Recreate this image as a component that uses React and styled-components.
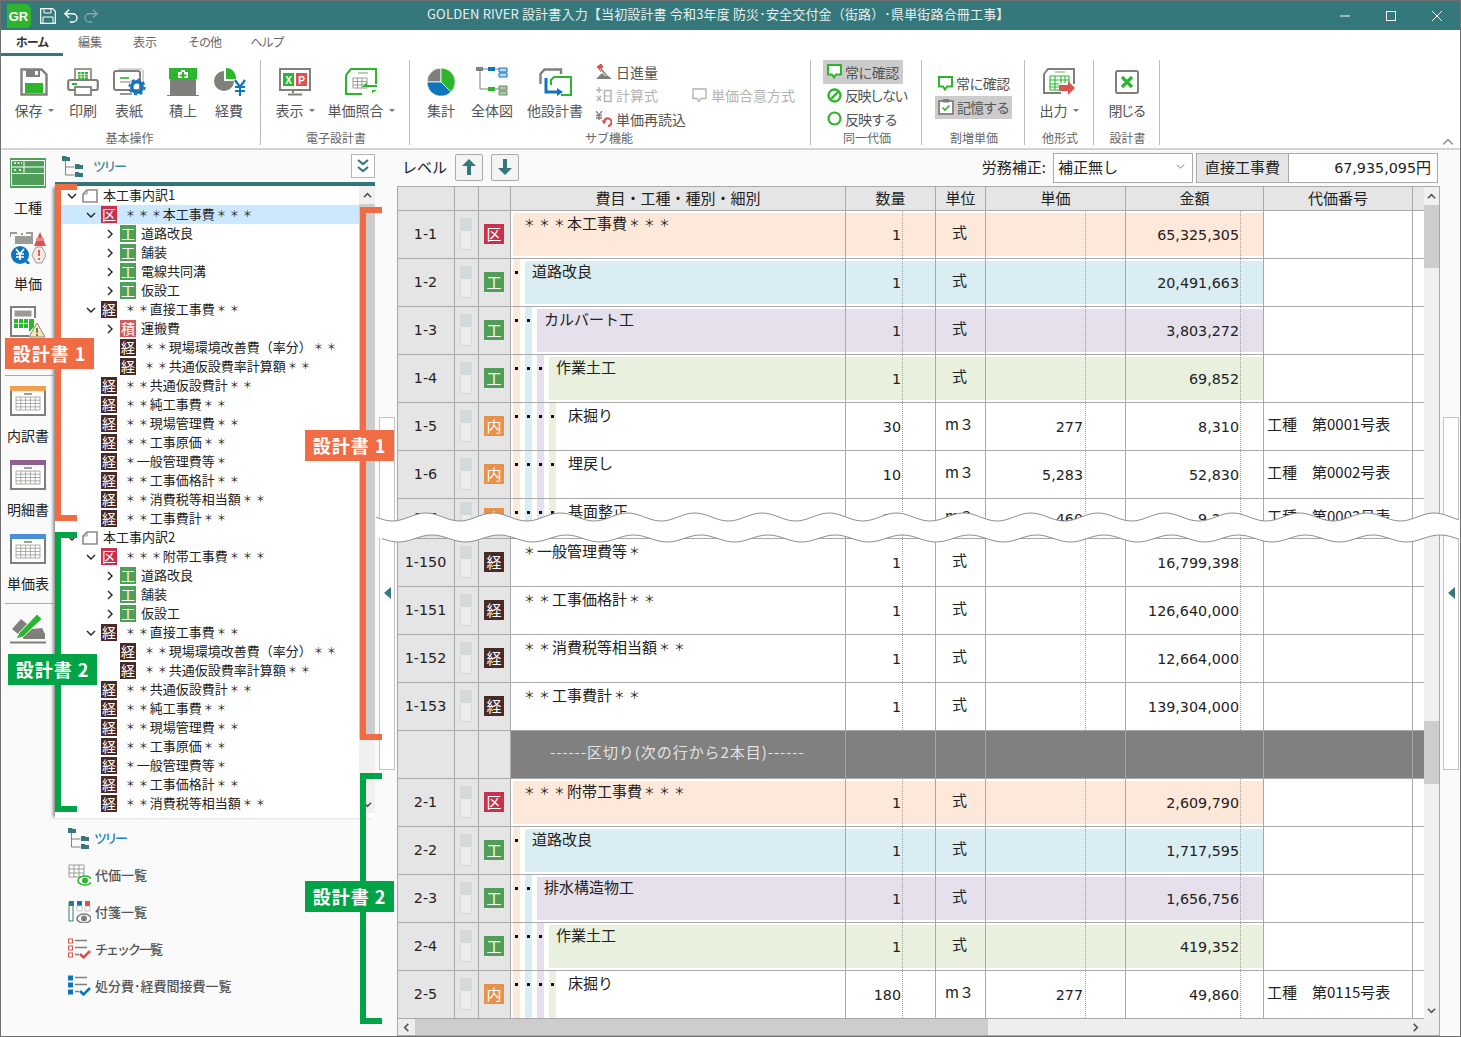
import React from 'react';
import styled, { createGlobalStyle } from 'styled-components';
import { Undo2, Redo2 } from 'lucide-react';

const TEAL = '#35787b';
const GRAY = '#7f7f7b';
const GREEN = '#2eb52e';
const BLUE = '#0f74bc';
const RED = '#d9534f';
const LINE = '#a9a9a9';
const ORANGE_MARK = '#ef6c44';
const GREEN_MARK = '#00a346';

const TONES = ['#fde8da', '#daedf3', '#e5e0ec', '#e9f0dd'];
const BADGES = { 区: '#c9304f', 工: '#4f9f56', 経: '#4a2a26', 積: '#cf5a5a', 内: '#e8914a' };

const GlobalStyle = createGlobalStyle`
  html, body {
    margin: 0;
    padding: 0;
    background: #ffffff;
  }
  body {
    font-family: "Noto Sans CJK JP", "Noto Sans", sans-serif;
    color: #222222;
  }
`;

const Window = styled.div`
  position: relative;
  box-sizing: border-box;
  width: 1461px;
  height: 1037px;
  border: 1px solid #707070;
  display: flex;
  flex-direction: column;
  overflow: hidden;
  background: #fafafa;
`;

/* title bar */
const TitleBar = styled.div`
  flex: none;
  height: 29px;
  background: ${TEAL};
  display: flex;
  align-items: center;
  color: #e6f0f0;
`;

const QuickAccess = styled.div`
  width: 426px;
  display: flex;
  align-items: center;
  padding-left: 6px;
  box-sizing: border-box;
`;

const QuickButton = styled.span`
  display: flex;
  margin-left: ${(p) => p.$gap}px;
  color: ${(p) => (p.$faded ? '#7fa9ab' : '#ffffff')};
`;

const TitleText = styled.div`
  font-size: 13px;
  letter-spacing: 0.16px;
  line-height: 25px;
  padding-bottom: 4px;
  white-space: nowrap;
`;

const WindowButtons = styled.div`
  margin-left: auto;
  display: flex;
`;

const WindowButton = styled.span`
  width: 46px;
  height: 29px;
  display: flex;
  align-items: center;
  justify-content: center;
`;

/* tabs */
const TabBar = styled.div`
  flex: none;
  height: 26px;
  display: flex;
  background: #ffffff;
`;

const Tab = styled.div`
  box-sizing: border-box;
  width: ${(p) => p.$w}px;
  text-align: center;
  font-size: 12px;
  line-height: 24px;
  letter-spacing: ${(p) => (p.$tight ? '-1px' : '0')};
  color: ${(p) => (p.$active ? '#333333' : '#666666')};
  font-weight: ${(p) => (p.$active ? 700 : 400)};
  border-bottom: 3px solid ${(p) => (p.$active ? TEAL : 'transparent')};
`;

/* ribbon */
const Ribbon = styled.div`
  flex: none;
  box-sizing: border-box;
  height: 94px;
  display: flex;
  background: #ffffff;
  border-bottom: 2px solid #d4d4d4;
`;

const Group = styled.div`
  box-sizing: border-box;
  width: ${(p) => p.$w}px;
  height: 85px;
  margin-top: 4px;
  border-right: 1px solid #bdbdbd;
  display: flex;
  flex-direction: column;
`;

const GroupBody = styled.div`
  flex: 1;
  display: flex;
  padding-left: ${(p) => p.$pad || 0}px;
  justify-content: ${(p) => (p.$center ? 'center' : 'flex-start')};
`;

const GroupLabel = styled.div`
  flex: none;
  height: 14px;
  line-height: 14px;
  font-size: 12px;
  color: #666666;
  text-align: center;
  padding-left: ${(p) => (p.$flush ? 0 : 2)}px;
  padding-right: ${(p) => (p.$flush ? 2 : 0)}px;
`;

const BigItem = styled.div`
  width: ${(p) => p.$w || 46}px;
  margin-left: ${(p) => p.$gap || 0}px;
  padding-top: 8px;
  display: flex;
  flex-direction: column;
  align-items: center;
`;

const IconSlot = styled.div`
  height: 28px;
  display: flex;
  align-items: center;
  justify-content: center;
`;

const BigLabel = styled.div`
  margin-top: 4px;
  font-size: 14px;
  line-height: 20px;
  letter-spacing: ${(p) => (p.$tight ? '-2px' : '0')};
  color: #555555;
  white-space: nowrap;
  display: flex;
  align-items: center;
`;

const Caret = styled.span`
  margin-left: 5px;
  width: 0;
  height: 0;
  border-left: 3px solid transparent;
  border-right: 3px solid transparent;
  border-top: 3px solid #777777;
`;

const SmallList = styled.div`
  display: flex;
  flex-direction: column;
  align-items: flex-start;
  justify-content: center;
  margin-left: ${(p) => p.$gap || 0}px;
`;

const SmallRow = styled.div`
  box-sizing: border-box;
  height: 23.5px;
  display: flex;
  align-items: center;
  gap: ${(p) => p.$gap || 4}px;
  padding: 0 ${(p) => p.$pad || 0}px 1px;
  font-size: 14px;
  white-space: nowrap;
  letter-spacing: ${(p) => (p.$tight ? `${p.$tight}px` : '0')};
  color: ${(p) => (p.$disabled ? '#b4b4b4' : '#555555')};
  background: ${(p) => (p.$active ? '#cccccc' : 'transparent')};
`;

const RibbonCollapse = styled.span`
  margin-left: auto;
  margin-right: 6px;
  align-self: flex-end;
  display: flex;
`;

/* main */
const Main = styled.div`
  flex: 1;
  min-height: 0;
  display: flex;
`;

const Rail = styled.div`
  flex: none;
  width: 54px;
  padding-top: 8px;
  box-sizing: border-box;
  display: flex;
  flex-direction: column;
  align-items: stretch;
`;

const RailGroup = styled.div`
  display: flex;
  flex-direction: column;
  gap: 5px;
`;

const RailItem = styled.div`
  height: 69px;
  display: flex;
  flex-direction: column;
  align-items: center;
`;

const RailLabel = styled.div`
  margin-top: 9px;
  font-size: 14px;
  line-height: 20px;
  white-space: nowrap;
  color: #222222;
`;

const RailDivider = styled.div`
  height: 1px;
  margin: 0 2px 10px 4px;
  background: #aaaaaa;
`;

const TreePane = styled.div`
  flex: none;
  width: 320px;
  display: flex;
  flex-direction: column;
  position: relative;
  z-index: 1;
`;

const PaneHeader = styled.div`
  flex: none;
  box-sizing: border-box;
  height: 36px;
  border-bottom: 4px solid ${TEAL};
  display: flex;
  align-items: center;
  padding-left: 7px;
`;

const PaneTitle = styled.div`
  margin-left: 9px;
  padding-bottom: 2px;
  font-size: 13px;
  font-weight: 500;
  letter-spacing: -2.5px;
  color: #3f8a9c;
`;

const PaneToggle = styled.div`
  margin-left: auto;
  box-sizing: border-box;
  width: 24px;
  height: 24px;
  border: 1px solid #b5b5b5;
  background: #ffffff;
  display: flex;
  align-items: center;
  justify-content: center;
`;

const TreeBody = styled.div`
  flex: none;
  height: 632px;
  display: flex;
  background: #ffffff;
  box-shadow: -3px 0 3px -1px rgba(0, 0, 0, 0.45);
`;

const TreeList = styled.div`
  flex: 1;
  overflow: hidden;
`;

const TreeRow = styled.div`
  height: 19px;
  display: flex;
  align-items: center;
  padding-left: ${(p) => 12 + 19 * p.$level}px;
  background: ${(p) => (p.$selected ? '#cce8ff' : 'transparent')};
  font-size: 13px;
  white-space: nowrap;
  color: #222222;
`;

const TreeText = styled.span`
  padding-bottom: 2px;
`;

const TreeArrow = styled.span`
  flex: none;
  width: 15px;
  display: flex;
`;

const TreeBadge = styled.span`
  flex: none;
  width: 16px;
  height: 17px;
  margin-right: 5px;
  background: ${(p) => BADGES[p.$type]};
  color: #ffffff;
  font-size: 14px;
  line-height: 16px;
  text-align: center;
`;

const DocMark = styled.span`
  flex: none;
  width: 16px;
  height: 16px;
  margin-right: 5px;
  display: flex;
`;

const Star = styled.span`
  display: inline-block;
  width: 1em;
  text-align: center;
  transform: scale(0.72);
  &:first-child {
    margin-left: 0.13em;
  }
`;

const ScrollTrack = styled.div`
  flex: none;
  width: ${(p) => p.$w}px;
  background: #f0f0f0;
  display: flex;
  flex-direction: column;
`;

const TreeTrack = styled(ScrollTrack)`
  height: 627px;
`;

const ScrollArrow = styled.div`
  flex: none;
  height: 18px;
  margin-top: ${(p) => (p.$end ? 'auto' : 0)};
  display: flex;
  align-items: center;
  justify-content: center;
`;

const ScrollThumb = styled.div`
  flex: none;
  height: ${(p) => p.$h}px;
  margin-top: ${(p) => p.$gap || 0}px;
  background: #cdcdcd;
`;

const NavList = styled.div`
  flex: 1;
  padding: 1px 0 0 13px;
  display: flex;
  flex-direction: column;
`;

const NavItem = styled.div`
  height: 37px;
  display: flex;
  align-items: center;
  gap: 4px;
  font-size: 13px;
  font-weight: 500;
  letter-spacing: ${(p) => (p.$tight ? `${p.$tight}px` : '0')};
  color: ${(p) => (p.$active ? '#1f7fc4' : '#555555')};
`;

const Splitter = styled.div`
  flex: none;
  width: ${(p) => p.$w}px;
  padding-left: ${(p) => p.$pad}px;
  box-sizing: border-box;
  display: flex;
  align-items: center;
`;

const CollapseHandle = styled.div`
  box-sizing: border-box;
  width: 16px;
  height: 353px;
  border: 1px solid #c4c4c4;
  background: #ffffff;
  display: flex;
  align-items: center;
  justify-content: center;
`;

const Triangle = styled.span`
  width: 0;
  height: 0;
  border-top: 6px solid transparent;
  border-bottom: 6px solid transparent;
  border-right: 7px solid ${TEAL};
`;

const GridPane = styled.div`
  flex: none;
  width: 1043px;
  display: flex;
  flex-direction: column;
`;

const Toolbar = styled.div`
  flex: none;
  height: 36px;
  box-sizing: border-box;
  padding: 3px 2px 3px 5px;
  display: flex;
  align-items: center;
  font-size: 15px;
`;

const LevelLabel = styled.div`
  padding-bottom: 4px;
  white-space: nowrap;
`;

const LevelButton = styled.div`
  box-sizing: border-box;
  width: 28px;
  height: 27px;
  margin-left: ${(p) => p.$gap}px;
  margin-bottom: 2px;
  border: 1px solid #aaaaaa;
  border-radius: 2px;
  background: #f4f4f4;
  display: flex;
  align-items: center;
  justify-content: center;
`;

const ToolLabel = styled.div`
  margin-left: auto;
  margin-right: 7px;
  padding-bottom: 4px;
  white-space: nowrap;
`;

const SelectBox = styled.div`
  box-sizing: border-box;
  width: 140px;
  height: 30px;
  border: 1px solid #aaaaaa;
  background: #ffffff;
  padding: 0 7px 3px 4px;
  display: flex;
  align-items: center;
  justify-content: space-between;
`;

const StatLabel = styled.div`
  box-sizing: border-box;
  width: 93px;
  height: 30px;
  margin-left: 3px;
  border: 1px solid #aaaaaa;
  background: #e5e5e5;
  text-align: center;
  line-height: 25px;
`;

const StatValue = styled.div`
  box-sizing: border-box;
  width: 149px;
  height: 30px;
  border: 1px solid #aaaaaa;
  border-left: none;
  background: #ffffff;
  padding-right: 6px;
  text-align: right;
  line-height: 25px;
`;

const Num = styled.span`
  font-family: "DejaVu Sans", sans-serif;
  font-size: 14.3px;
`;

const GridFrame = styled.div`
  flex: none;
  box-sizing: border-box;
  height: 850px;
  border: 1px solid ${LINE};
  display: flex;
  flex-direction: column;
  background: #ffffff;
`;

const GridTop = styled.div`
  flex: none;
  height: 832px;
  display: flex;
`;

const GridTable = styled.div`
  flex: none;
  width: 1026px;
  overflow: hidden;
`;

const COLUMNS = '57px 24px 32px 335px 90px 50px 140px 138px 149px 11px';

const HeadRow = styled.div`
  display: grid;
  grid-template-columns: ${COLUMNS};
  height: 24px;
  box-sizing: border-box;
  border-bottom: 1px solid ${LINE};
  background: #e5e5e5;
`;

const HeadCell = styled.div`
  box-sizing: border-box;
  border-right: ${(p) => (p.$last ? 'none' : `1px solid ${LINE}`)};
  font-size: 15px;
  line-height: 21px;
  text-align: center;
  white-space: nowrap;
`;

const Row = styled.div`
  display: grid;
  grid-template-columns: ${COLUMNS};
  height: ${(p) => p.$h || 48}px;
  box-sizing: border-box;
  border-bottom: 1px solid ${LINE};
  overflow: hidden;
`;

const SideCell = styled.div`
  box-sizing: border-box;
  background: #e5e5e5;
  border-right: 1px solid ${LINE};
  padding: 0 1px 1px 0;
  display: flex;
  align-items: center;
  justify-content: center;
`;

const StateGauge = styled.div`
  box-sizing: border-box;
  width: 12px;
  height: 32px;
  border: 1px solid #d6d8d9;
  background: linear-gradient(#d3d8db 12px, #ececec 12px);
`;

const RowBadge = styled.span`
  width: 20px;
  height: 20px;
  background: ${(p) => BADGES[p.$type]};
  color: #ffffff;
  font-size: 15px;
  line-height: 19px;
  text-align: center;
`;

const NameCell = styled.div`
  box-sizing: border-box;
  border-right: 1px solid ${LINE};
  padding-left: 2px;
  display: flex;
  gap: 5px;
`;

const Strip = styled.div`
  flex: none;
  width: 7px;
  background: ${(p) => p.$color};
  &::after {
    content: '';
    display: block;
    width: 3px;
    height: 3px;
    margin: 12px 0 0 2px;
    background: #111111;
  }
`;

const NameFill = styled.div`
  flex: 1;
  margin: 2px 0;
  padding-left: 7px;
  background: ${(p) => p.$tone || 'transparent'};
  font-size: 15px;
  line-height: 20px;
  white-space: nowrap;
`;

const ValueCell = styled.div`
  position: relative;
  box-sizing: border-box;
  padding: 2px 0;
  border-right: 1px solid ${LINE};
  background: ${(p) => p.$tone || 'transparent'};
  background-clip: content-box;
  display: flex;
  align-items: center;
  justify-content: ${(p) => (p.$align === 'center' ? 'center' : 'flex-end')};
  &::after {
    content: ${(p) => (p.$dot ? "''" : 'none')};
    position: absolute;
    top: 0;
    bottom: 0;
    right: ${(p) => p.$dot}px;
    border-right: 1px dotted #a0a0a0;
  }
`;

const ValueText = styled.span`
  padding: 0 ${(p) => p.$pad}px 4px 0;
`;

const UnitText = styled.span`
  font-size: 15px;
  padding: 0 2px 6px 0;
`;

const CodeCell = styled.div`
  box-sizing: border-box;
  border-right: 1px solid ${LINE};
  padding: 0 0 7px 3px;
  display: flex;
  align-items: center;
  font-size: 15px;
  white-space: pre;
`;

const BlankCell = styled.div``;

const DarkCell = styled.div`
  box-sizing: border-box;
  background: #808080;
  border-right: ${(p) => (p.$last ? 'none' : '1px solid #a5a5a5')};
  color: #e4e4e4;
  font-size: 15px;
  letter-spacing: 0.95px;
  line-height: 42px;
  padding-left: ${(p) => p.$pad || 0}px;
  white-space: nowrap;
`;

const HScroll = styled.div`
  flex: none;
  height: 16px;
  background: #eeeeee;
  display: flex;
  align-items: center;
`;

const HArrow = styled.span`
  flex: none;
  width: 17px;
  display: flex;
  justify-content: center;
  margin-left: ${(p) => (p.$end ? 'auto' : 0)};
  margin-right: ${(p) => (p.$end ? 15 : 0)}px;
`;

const HThumb = styled.div`
  flex: none;
  width: 573px;
  height: 16px;
  background: #cdcdcd;
`;

/* annotations lying over the screen */
const Bracket = styled.div`
  position: absolute;
  z-index: 4;
  box-sizing: border-box;
  left: ${(p) => p.$x - 1}px;
  top: ${(p) => p.$y - 1}px;
  width: 22px;
  height: ${(p) => p.$h}px;
  border: 6px solid ${(p) => p.$color};
  border-right: none;
`;

const Callout = styled.div`
  position: absolute;
  z-index: 5;
  left: ${(p) => p.$x - 1}px;
  top: ${(p) => p.$y - 1}px;
  width: 89px;
  height: 31px;
  background: ${(p) => p.$color};
  color: #ffffff;
  font-size: 18px;
  font-weight: 700;
  letter-spacing: 1px;
  line-height: 30px;
  text-align: center;
  white-space: nowrap;
`;

const CutBand = styled.svg`
  position: absolute;
  z-index: 3;
  left: 374px;
  top: 504px;
`;

/* icons */
const SaveIcon = () => (
  <svg width="28" height="28" viewBox="0 0 28 28">
    <path d="M1.5 1.5h20l5 5v20h-25z" fill="#fff" stroke={GRAY} strokeWidth="2.4" />
    <rect x="6" y="1" width="14" height="8" fill={GRAY} />
    <rect x="15" y="3" width="3" height="4" fill="#fff" />
    <rect x="5" y="15" width="18" height="10" fill={GREEN} />
  </svg>
);

const PrintIcon = () => (
  <svg width="32" height="28" viewBox="0 0 32 28">
    <rect x="8" y="1" width="16" height="12" fill="#fff" stroke={GRAY} strokeWidth="1.6" />
    <path d="M11 4h10v7H11z" fill={GREEN} />
    <path d="M11 6.5h10M11 9h10M14 4v7M17.5 4v7" stroke="#fff" strokeWidth="0.7" />
    <rect x="1.2" y="12" width="29.6" height="10" rx="2" fill="#fff" stroke={GRAY} strokeWidth="2.2" />
    <rect x="5" y="15" width="5" height="2" fill={GREEN} />
    <rect x="8" y="19" width="16" height="8" fill="#fff" stroke={GRAY} strokeWidth="1.8" />
  </svg>
);

const CoverIcon = () => (
  <svg width="33" height="28" viewBox="0 0 33 28">
    <path d="M30 2v14M5 1h24" stroke="#b0b0ac" strokeWidth="1.2" fill="none" />
    <rect x="1" y="3" width="26" height="19" rx="2" fill="#fff" stroke={GRAY} strokeWidth="2" />
    <path d="M7 10h9" stroke={GREEN} strokeWidth="1.6" />
    <path d="M7 14h13" stroke="#b0b0ac" strokeWidth="1.6" />
    <path d="M7 26h12" stroke={GRAY} strokeWidth="1.6" />
    <circle cx="24" cy="19" r="5.2" fill="none" stroke={BLUE} strokeWidth="3.4" />
    <circle cx="24" cy="19" r="7.6" fill="none" stroke={BLUE} strokeWidth="2" strokeDasharray="3 3" />
  </svg>
);

const StackIcon = () => (
  <svg width="32" height="28" viewBox="0 0 32 28">
    <rect x="2" y="0" width="28" height="11" fill={GREEN} />
    <rect x="3" y="11" width="26" height="16" fill={GRAY} />
    <path d="M11 10h10V4h-3V2h-4v2h-3z" fill="#fff" />
    <path d="M16 4v8M12.5 7.5h7" stroke={GREEN} strokeWidth="2" />
    <path d="M0 27.5h32" stroke={GRAY} />
  </svg>
);

const ExpenseIcon = () => (
  <svg width="33" height="28" viewBox="0 0 33 28">
    <path d="M11 3A10 10 0 1 0 21 13H11z" fill={GRAY} />
    <path d="M13 0a10 10 0 0 1 10 11H13z" fill={GREEN} />
    <path d="M22 12l5 7 5-7M27 19v9M22 19h10M22 23h10" fill="none" stroke={BLUE} strokeWidth="2.2" />
  </svg>
);

const SheetIcon = () => (
  <svg width="32" height="28" viewBox="0 0 32 28">
    <rect x="1" y="1" width="30" height="21" fill="#fff" stroke={GRAY} strokeWidth="2" />
    <path d="M14 22v3M9 26.5h14" stroke={GRAY} strokeWidth="2" />
    <rect x="4" y="5" width="11" height="13" fill={GREEN} />
    <rect x="17" y="5" width="11" height="13" fill={RED} />
    <text x="9.5" y="15.5" textAnchor="middle" fontSize="10" fontWeight="700" fill="#fff" fontFamily="Liberation Sans">X</text>
    <text x="22.5" y="15.5" textAnchor="middle" fontSize="10" fontWeight="700" fill="#fff" fontFamily="Liberation Sans">P</text>
  </svg>
);

const CompareIcon = () => (
  <svg width="32" height="28" viewBox="0 0 32 28">
    <path d="M1 7L6 1h25v15M1 7v19h16" fill="#fff" stroke={GREEN} strokeWidth="2" />
    <path d="M13 5h10" stroke="#9bcf9b" strokeWidth="1.6" />
    <path d="M8 10h14v10H8zM8 13.5h14M8 17h14M12.5 10v10M17 10v10" fill="none" stroke="#9a9a96" />
    <path d="M32 17H22v-3l-5 5h15zM17 22h10v3l5-3z" fill={GREEN} />
  </svg>
);

const PieIcon = () => (
  <svg width="28" height="28" viewBox="0 0 28 28">
    <path d="M14 14V0A14 14 0 0 0 0 14z" fill={GRAY} stroke="#fff" strokeWidth="0.8" />
    <path d="M14 14V0a14 14 0 0 1 10 24z" fill={GREEN} stroke="#fff" strokeWidth="0.8" />
    <path d="M14 14l10 10A14 14 0 0 1 0 14z" fill={BLUE} stroke="#fff" strokeWidth="0.8" />
  </svg>
);

const OverviewIcon = () => (
  <svg width="32" height="30" viewBox="0 0 32 30">
    <rect x="0" y="0" width="7" height="4" fill={GRAY} />
    <path d="M4 4v18h8M7 2h5" fill="none" stroke={GRAY} strokeWidth="1" />
    <rect x="12" y="0" width="7" height="4" fill={BLUE} />
    <rect x="12" y="20" width="7" height="4" fill={GREEN} />
    <path d="M19 2h4M19 22h4" stroke={GRAY} />
    <path d="M23 1h8v4h-8zM23 6h8v4h-8z" fill="#bcd8ee" stroke={BLUE} />
    <path d="M23 19h8v4h-8zM23 24h8v4h-8z" fill="#9ad29a" stroke={GRAY} />
  </svg>
);

const OtherDocIcon = () => (
  <svg width="33" height="28" viewBox="0 0 33 28">
    <path d="M1.5 16V6l4-4.5H22V6" fill="none" stroke={GRAY} strokeWidth="2.4" />
    <path d="M7 10v14h11" fill="none" stroke={BLUE} strokeWidth="3" />
    <path d="M18 20l6 4-6 4z" fill={BLUE} />
    <path d="M12 17v-5l3-3h17v18H22" fill="none" stroke={GREEN} strokeWidth="2" />
  </svg>
);

const ExportIcon = () => (
  <svg width="32" height="28" viewBox="0 0 32 28">
    <path d="M1 6l4-5h26v15M1 6v19h17" fill="#fff" stroke={GRAY} strokeWidth="2" />
    <path d="M12 4h10" stroke="#9ad29a" strokeWidth="1.6" />
    <path d="M7 8h19v7M7 8v14h9M7 12h19M7 16h9M7 19h9M12 8v14M18 8v7M22 8v7" fill="none" stroke={GREEN} strokeWidth="1.1" />
    <path d="M16 17h9v-4l7 7-7 7v-4h-9z" fill={RED} />
  </svg>
);

const CloseDocIcon = () => (
  <svg width="24" height="24" viewBox="0 0 24 24">
    <rect x="1" y="1" width="22" height="22" rx="1.5" fill="#fff" stroke={GRAY} strokeWidth="2" />
    <path d="M7 7l10 10M17 7L7 17" stroke={GREEN} strokeWidth="3.2" />
  </svg>
);

const HammerIcon = () => (
  <svg width="16" height="16" viewBox="0 0 16 16">
    <path d="M0 15l6-6 3 3 2-1 5 4z" fill={GRAY} />
    <path d="M5 8L2 3M1 3l4-3 2 3-3 2z" fill={RED} stroke={RED} />
    <path d="M5 5l5 6" stroke={GRAY} strokeWidth="1.6" />
  </svg>
);

const FormulaIcon = () => (
  <svg width="16" height="16" viewBox="0 0 16 16">
    <path d="M3 0v6M0 3h6M1 9l4 5M5 9l-4 5" stroke="#b4b4b4" strokeWidth="1.5" />
    <rect x="8.5" y="3.5" width="6.5" height="11" fill="none" stroke="#b4b4b4" strokeWidth="1.5" />
    <path d="M8 9h7" stroke="#b4b4b4" />
  </svg>
);

const ReloadYenIcon = () => (
  <svg width="16" height="16" viewBox="0 0 16 16">
    <path d="M0 0l3 4 3-4M3 4v5M0 4.5h6M0 7h6" fill="none" stroke={GRAY} strokeWidth="1.3" />
    <path d="M8 11a3.8 3.8 0 1 1 4 4" fill="none" stroke={RED} strokeWidth="2.2" />
    <path d="M5.5 9.5h5l-2.5 4z" fill={RED} />
  </svg>
);

const BubbleIcon = ({ color = GREEN, width = 2 }) => (
  <svg width="15" height="15" viewBox="0 0 15 15">
    <path d="M1 1h13v9.5H9L7 13.5 5 10.5H1z" fill="#fff" stroke={color} strokeWidth={width} />
  </svg>
);

const NoEntryIcon = () => (
  <svg width="15" height="15" viewBox="0 0 15 15">
    <circle cx="7.5" cy="7.5" r="6" fill="none" stroke={GREEN} strokeWidth="2.4" />
    <path d="M4 11l7-7" stroke={GREEN} strokeWidth="2.4" />
  </svg>
);

const RingIcon = () => (
  <svg width="15" height="15" viewBox="0 0 15 15">
    <circle cx="7.5" cy="7.5" r="6" fill="none" stroke={GREEN} strokeWidth="2.2" />
  </svg>
);

const MemoIcon = () => (
  <svg width="16" height="16" viewBox="0 0 16 16">
    <rect x="1" y="2" width="14" height="13" fill="#fff" stroke={GRAY} strokeWidth="1.8" />
    <rect x="5" y="0" width="6" height="3.5" fill={GRAY} />
    <path d="M4.5 8.5l2.5 2.5 4.5-4.5" fill="none" stroke={GREEN} strokeWidth="1.6" />
  </svg>
);

const PaneTreeIcon = ({ w = 22 }) => (
  <svg width={w} height={w} viewBox="0 0 22 22">
    <path d="M0 1h4l1 1h3v4H0z" fill={TEAL} />
    <path d="M3.5 6v14h9M3.5 12h9" fill="none" stroke={GRAY} />
    <path d="M13 9h4l1 1h3v4h-8zM13 18h8v4h-8zM13 17h4v2h-4z" fill={TEAL} />
  </svg>
);

const TableGridIcon = () => (
  <svg width="36" height="30" viewBox="0 0 36 30">
    <rect x="0.5" y="0.5" width="35" height="29" fill="#4f9f5a" stroke="#4f9f5a" />
    <path d="M1.5 2.5h33v25h-33z" fill="none" stroke="#fff" />
    <path d="M1.5 9h33M1.5 15.5h33M14 2.5v13" stroke="#fff" />
    <path d="M4 5h2M7.5 5h2M11 5h1M4 12h2M9 12h2" stroke="#fff" strokeWidth="1.6" />
  </svg>
);

const UnitPriceIcon = () => (
  <svg width="36" height="32" viewBox="0 0 36 32">
    <path d="M0 1h7M0 1v4M12 1v2M16 1h6v3" fill="none" stroke="#9a9a96" strokeWidth="2" />
    <rect x="5" y="4" width="18" height="8" fill="#9a9a96" />
    <path d="M30 0l6 14H24z" fill="#d9534f" />
    <path d="M26 6h8v3h-8z" fill="#e58a86" />
    <circle cx="10" cy="23" r="9" fill={BLUE} />
    <path d="M6 17l4 5 4-5M10 22v6M6 22h8M6 25h8" fill="none" stroke="#fff" strokeWidth="1.7" />
    <path d="M16 29l3 3" stroke={BLUE} strokeWidth="2.6" />
    <path d="M26 15h6l4 8-4 8h-6l-4-8z" fill="#f6e9e2" stroke="#9a9a96" />
    <path d="M29 18v6M29 26v2" stroke={RED} strokeWidth="1.8" />
  </svg>
);

const CalcAlertIcon = () => (
  <svg width="36" height="32" viewBox="0 0 36 32">
    <path d="M25 12V1H1v29h18" fill="#fff" stroke={GRAY} strokeWidth="2" />
    <rect x="4.5" y="4.5" width="17" height="6" fill="#9a9a96" />
    <path d="M4 13h4v4H4zM9 13h4v4H9zM14 13h4v4h-4zM4 18h4v4H4zM9 18h4v4H9zM14 18h4v4h-4z" fill={GREEN} />
    <path d="M19 13h5v8l-5 5z" fill={GREEN} />
    <path d="M27 17l8 14H19z" fill="#f7e6b5" stroke="#8a8a86" />
    <path d="M27 22v5M27 28v2" stroke="#555" strokeWidth="1.5" />
  </svg>
);

const LedgerIcon = ({ bar }) => (
  <svg width="36" height="30" viewBox="0 0 36 30">
    <rect x="0" y="0" width="36" height="5" fill={bar} />
    <path d="M1 5v24h34V5" fill="#fff" stroke={GRAY} strokeWidth="2" />
    <path d="M14 8h8" stroke={GRAY} strokeWidth="1.5" />
    <path d="M6 11h24v13H6zM6 14.2h24M6 17.5h24M6 20.8h24M10.8 11v13M15.6 11v13M20.4 11v13M25.2 11v13" fill="#fff" stroke="#9a9a96" strokeWidth="0.8" />
  </svg>
);

const PencilIcon = () => (
  <svg width="36" height="30" viewBox="0 0 36 30">
    <path d="M2 15L11 5l12 10 9-1 3 6v5H14z" fill={GRAY} />
    <path d="M9 19L27 0l5 5-19 18-7 2z" fill={GREEN} stroke="#fff" />
    <path d="M0 28.5h36" stroke={GRAY} strokeWidth="2" />
  </svg>
);

const EyeMark = ({ color }) => (
  <>
    <ellipse cx="16" cy="16.5" rx="7" ry="4.5" fill="#fff" stroke={color} strokeWidth="1.6" />
    <circle cx="16" cy="16.5" r="3" fill={color} />
  </>
);

const TableEyeIcon = () => (
  <svg width="23" height="22" viewBox="0 0 23 22">
    <path d="M1 1h15v12H1zM1 5h15M1 9h15M6 1v12M11 1v12" fill="#fff" stroke="#9a9a96" />
    <g transform="translate(1 0)">
      <EyeMark color={GREEN} />
    </g>
  </svg>
);

const StickyEyeIcon = () => (
  <svg width="23" height="22" viewBox="0 0 23 22">
    <path d="M1 1h4v19H1z" fill="#fff" stroke={TEAL} />
    <rect x="1" y="0" width="5" height="5" fill={TEAL} />
    <rect x="9" y="0" width="5" height="5" fill={BLUE} />
    <path d="M9 5h5v5H9zM17 5h5v5h-5z" fill="#fff" stroke="#c9c9c9" />
    <rect x="17" y="0" width="5" height="5" fill={RED} />
    <g transform="translate(0 1)">
      <EyeMark color={GRAY} />
    </g>
  </svg>
);

const CheckListIcon = ({ color, solid }) => (
  <svg width="23" height="22" viewBox="0 0 23 22">
    {[1, 8, 15].map((y) => (
      <rect
        key={y}
        x="0.5"
        y={y}
        width="4"
        height="4"
        fill={solid ? color : '#fff'}
        stroke={color}
      />
    ))}
    <path d="M7 2.5h12M7 9.5h12M7 16.5h4" stroke={GRAY} strokeWidth="1.6" />
    <path d="M12 16l3.5 3.5L22 13" fill="none" stroke={color} strokeWidth="2.6" />
  </svg>
);

const Chevron = ({ dir = 'down', size = 9, color = '#222222', width = 1.4 }) => {
  const points = {
    down: '1,3 5,7 9,3',
    up: '1,7 5,3 9,7',
    right: '3,1 7,5 3,9',
    left: '7,1 3,5 7,9',
  }[dir];
  return (
    <svg width={size} height={size} viewBox="0 0 10 10">
      <polyline points={points} fill="none" stroke={color} strokeWidth={width} />
    </svg>
  );
};

const DocFrame = () => (
  <svg width="16" height="16" viewBox="0 0 16 16">
    <path d="M5 2h10v12H1V6z" fill="#fff" stroke="#8a8a8a" strokeWidth="1.6" />
    <path d="M1 6h4V2" fill="none" stroke="#8a8a8a" strokeWidth="1" />
  </svg>
);

const ArrowButtonIcon = ({ down }) => (
  <svg width="18" height="18" viewBox="0 0 18 18">
    <path
      d={down ? 'M7 1h4v9h5l-7 7-7-7h5z' : 'M7 17h4V8h5L9 1 2 8h5z'}
      fill={TEAL}
    />
  </svg>
);

/* data */
const treeData = (title, head, children, tail) => [
  { level: 0, kind: 'doc', text: title, open: true },
  { level: 1, type: '区', text: head, open: true, selected: title.endsWith('1') },
  ...children.map((text) => ({ level: 2, type: '工', text, closed: true })),
  { level: 1, type: '経', text: '＊＊直接工事費＊＊', open: true },
  ...tail,
];

const costRows = (names) => names.map((text) => ({ level: 1, type: '経', text }));

const subCost = [
  { level: 2, type: '経', text: '＊＊現場環境改善費（率分）＊＊' },
  { level: 2, type: '経', text: '＊＊共通仮設費率計算額＊＊' },
];

const treeRows = [
  ...treeData('本工事内訳1', '＊＊＊本工事費＊＊＊', ['道路改良', '舗装', '電線共同溝', '仮設工'], [
    { level: 2, type: '積', text: '運搬費', closed: true },
    ...subCost,
    ...costRows([
      '＊＊共通仮設費計＊＊',
      '＊＊純工事費＊＊',
      '＊＊現場管理費＊＊',
      '＊＊工事原価＊＊',
      '＊一般管理費等＊',
      '＊＊工事価格計＊＊',
      '＊＊消費税等相当額＊＊',
      '＊＊工事費計＊＊',
    ]),
  ]),
  ...treeData('本工事内訳2', '＊＊＊附帯工事費＊＊＊', ['道路改良', '舗装', '仮設工'], [
    ...subCost,
    ...costRows([
      '＊＊共通仮設費計＊＊',
      '＊＊純工事費＊＊',
      '＊＊現場管理費＊＊',
      '＊＊工事原価＊＊',
      '＊一般管理費等＊',
      '＊＊工事価格計＊＊',
      '＊＊消費税等相当額＊＊',
    ]),
  ]),
];

const rowsTop = [
  { no: '1-1', type: '区', level: 0, name: '＊＊＊本工事費＊＊＊', qty: '1', unit: '式', amount: '65,325,305' },
  { no: '1-2', type: '工', level: 1, name: '道路改良', qty: '1', unit: '式', amount: '20,491,663' },
  { no: '1-3', type: '工', level: 2, name: 'カルバート工', qty: '1', unit: '式', amount: '3,803,272' },
  { no: '1-4', type: '工', level: 3, name: '作業土工', qty: '1', unit: '式', amount: '69,852' },
  { no: '1-5', type: '内', level: 4, name: '床掘り', qty: '30', unit: 'm３', price: '277', amount: '8,310', code: '工種　第0001号表' },
  { no: '1-6', type: '内', level: 4, name: '埋戻し', qty: '10', unit: 'm３', price: '5,283', amount: '52,830', code: '工種　第0002号表' },
  { no: '1-7', type: '内', level: 4, name: '基面整正', qty: '20', unit: 'm２', price: '460', amount: '9,200', code: '工種　第0003号表', h: 40 },
  { no: '1-150', type: '経', level: 0, plain: true, name: '＊一般管理費等＊', qty: '1', unit: '式', amount: '16,799,398' },
  { no: '1-151', type: '経', level: 0, plain: true, name: '＊＊工事価格計＊＊', qty: '1', unit: '式', amount: '126,640,000' },
  { no: '1-152', type: '経', level: 0, plain: true, name: '＊＊消費税等相当額＊＊', qty: '1', unit: '式', amount: '12,664,000' },
  { no: '1-153', type: '経', level: 0, plain: true, name: '＊＊工事費計＊＊', qty: '1', unit: '式', amount: '139,304,000' },
];

const rowsBottom = [
  { no: '2-1', type: '区', level: 0, name: '＊＊＊附帯工事費＊＊＊', qty: '1', unit: '式', amount: '2,609,790' },
  { no: '2-2', type: '工', level: 1, name: '道路改良', qty: '1', unit: '式', amount: '1,717,595' },
  { no: '2-3', type: '工', level: 2, name: '排水構造物工', qty: '1', unit: '式', amount: '1,656,756' },
  { no: '2-4', type: '工', level: 3, name: '作業土工', qty: '1', unit: '式', amount: '419,352' },
  { no: '2-5', type: '内', level: 4, name: '床掘り', qty: '180', unit: 'm３', price: '277', amount: '49,860', code: '工種　第0115号表' },
];

const wavePoints = (from, to, mid, amp, crest) => {
  const points = [];
  for (let x = from; x <= to; x += 3) {
    const y = mid - amp * Math.cos((2 * Math.PI * (x - crest)) / 67.2);
    points.push([x, Number(y.toFixed(2))]);
  }
  return points;
};

const topWave = wavePoints(1, 1085, 12, 4, 51);
const lowWave = wavePoints(1, 1085, 33.5, 3.5, 57);
const toPath = (pts) => pts.map(([x, y]) => `${x},${y}`).join(' ');

const withStars = (text) =>
  text.split(/(＊)/).filter(Boolean).map((part, i) => (part === '＊' ? <Star key={i}>＊</Star> : part));

const TreeItem = ({ item }) => (
  <TreeRow $level={item.level} $selected={item.selected}>
    <TreeArrow>
      {item.open && <Chevron dir="down" size={10} />}
      {item.closed && <Chevron dir="right" size={10} />}
    </TreeArrow>
    {item.kind === 'doc' ? (
      <DocMark>
        <DocFrame />
      </DocMark>
    ) : (
      <TreeBadge $type={item.type}>{item.type}</TreeBadge>
    )}
    <TreeText>{withStars(item.text)}</TreeText>
  </TreeRow>
);

const DataRow = ({ row }) => {
  const tone = row.plain ? null : TONES[row.level];
  return (
    <Row $h={row.h}>
      <SideCell>
        <Num>{row.no}</Num>
      </SideCell>
      <SideCell>
        <StateGauge />
      </SideCell>
      <SideCell>
        <RowBadge $type={row.type}>{row.type}</RowBadge>
      </SideCell>
      <NameCell>
        {TONES.slice(0, row.level).map((color) => (
          <Strip key={color} $color={color} />
        ))}
        <NameFill $tone={tone}>{withStars(row.name)}</NameFill>
      </NameCell>
      <ValueCell $tone={tone} $dot={32}>
        <ValueText $pad={34}>
          <Num>{row.qty}</Num>
        </ValueText>
      </ValueCell>
      <ValueCell $tone={tone} $align="center">
        <UnitText>{row.unit}</UnitText>
      </ValueCell>
      <ValueCell $tone={tone} $dot={39}>
        <ValueText $pad={42}>
          <Num>{row.price}</Num>
        </ValueText>
      </ValueCell>
      <ValueCell $tone={tone} $dot={22}>
        <ValueText $pad={24}>
          <Num>{row.amount}</Num>
        </ValueText>
      </ValueCell>
      <CodeCell>{row.code}</CodeCell>
      <BlankCell />
    </Row>
  );
};

const App = () => (
  <Window>
    <GlobalStyle />
    <TitleBar>
      <QuickAccess>
        <svg width="24" height="24" viewBox="0 0 24 24">
          <path d="M0 0h20l4 4v17l-3 3H0z" fill={GREEN} />
          <text x="11.5" y="17" textAnchor="middle" fontSize="13" fontWeight="700" fill="#fff" fontFamily="Liberation Sans">
            GR
          </text>
        </svg>
        <QuickButton $gap={9}>
          <svg width="16" height="16" viewBox="0 0 16 16">
            <path d="M.7.7h12l2.6 2.6v12H.7z" fill="none" stroke="#fff" strokeWidth="1.2" />
            <path d="M4 1v4h7V1M3 15V9h10v6" fill="none" stroke="#fff" />
          </svg>
        </QuickButton>
        <QuickButton $gap={6}>
          <Undo2 size={18} strokeWidth={1.8} />
        </QuickButton>
        <QuickButton $gap={2} $faded>
          <Redo2 size={18} strokeWidth={1.8} />
        </QuickButton>
      </QuickAccess>
      <TitleText>
        GOLDEN RIVER 設計書入力【当初設計書 令和3年度 防災･安全交付金（街路）･県単街路合冊工事】
      </TitleText>
      <WindowButtons>
        <WindowButton>
          <svg width="10" height="10" viewBox="0 0 10 10">
            <path d="M0 5h10" stroke="#fff" />
          </svg>
        </WindowButton>
        <WindowButton>
          <svg width="10" height="10" viewBox="0 0 10 10">
            <rect x="0.5" y="0.5" width="9" height="9" fill="none" stroke="#fff" />
          </svg>
        </WindowButton>
        <WindowButton>
          <svg width="10" height="10" viewBox="0 0 10 10">
            <path d="M0 0l10 10M10 0L0 10" stroke="#fff" />
          </svg>
        </WindowButton>
      </WindowButtons>
    </TitleBar>

    <TabBar>
      <Tab $w={62} $active $tight>
        ホーム
      </Tab>
      <Tab $w={54}>編集</Tab>
      <Tab $w={56}>表示</Tab>
      <Tab $w={63} $tight>
        その他
      </Tab>
      <Tab $w={62} $tight>
        ヘルプ
      </Tab>
    </TabBar>

    <Ribbon>
      <Group $w={260}>
        <GroupBody $pad={10}>
          <BigItem>
            <IconSlot>
              <SaveIcon />
            </IconSlot>
            <BigLabel>
              保存
              <Caret />
            </BigLabel>
          </BigItem>
          <BigItem $gap={3}>
            <IconSlot>
              <PrintIcon />
            </IconSlot>
            <BigLabel>印刷</BigLabel>
          </BigItem>
          <BigItem>
            <IconSlot>
              <CoverIcon />
            </IconSlot>
            <BigLabel>表紙</BigLabel>
          </BigItem>
          <BigItem $gap={8}>
            <IconSlot>
              <StackIcon />
            </IconSlot>
            <BigLabel>積上</BigLabel>
          </BigItem>
          <BigItem>
            <IconSlot>
              <ExpenseIcon />
            </IconSlot>
            <BigLabel>経費</BigLabel>
          </BigItem>
        </GroupBody>
        <GroupLabel $flush>基本操作</GroupLabel>
      </Group>

      <Group $w={149}>
        <GroupBody $pad={1}>
          <BigItem $w={66}>
            <IconSlot>
              <SheetIcon />
            </IconSlot>
            <BigLabel>
              表示
              <Caret />
            </BigLabel>
          </BigItem>
          <BigItem $w={66}>
            <IconSlot>
              <CompareIcon />
            </IconSlot>
            <BigLabel>
              単価照合
              <Caret />
            </BigLabel>
          </BigItem>
        </GroupBody>
        <GroupLabel>電子設計書</GroupLabel>
      </Group>

      <Group $w={401}>
        <GroupBody $pad={8}>
          <BigItem>
            <IconSlot>
              <PieIcon />
            </IconSlot>
            <BigLabel>集計</BigLabel>
          </BigItem>
          <BigItem $gap={5}>
            <IconSlot>
              <OverviewIcon />
            </IconSlot>
            <BigLabel>全体図</BigLabel>
          </BigItem>
          <BigItem $w={56} $gap={12}>
            <IconSlot>
              <OtherDocIcon />
            </IconSlot>
            <BigLabel>他設計書</BigLabel>
          </BigItem>
          <SmallList $gap={13}>
            <SmallRow>
              <HammerIcon />
              日進量
            </SmallRow>
            <SmallRow $disabled>
              <FormulaIcon />
              計算式
            </SmallRow>
            <SmallRow>
              <ReloadYenIcon />
              単価再読込
            </SmallRow>
          </SmallList>
          <SmallList $gap={6}>
            <SmallRow $disabled>
              <BubbleIcon color="#b4b4b4" width={1.4} />
              単価合意方式
            </SmallRow>
          </SmallList>
        </GroupBody>
        <GroupLabel $flush>サブ機能</GroupLabel>
      </Group>

      <Group $w={111}>
        <GroupBody $pad={12}>
          <SmallList>
            <SmallRow $active $pad={4} $gap={3} $tight={-0.6}>
              <BubbleIcon />
              常に確認
            </SmallRow>
            <SmallRow $pad={4} $gap={3} $tight={-1.6}>
              <NoEntryIcon />
              反映しない
            </SmallRow>
            <SmallRow $pad={4} $gap={3} $tight={-1}>
              <RingIcon />
              反映する
            </SmallRow>
          </SmallList>
        </GroupBody>
        <GroupLabel>同一代価</GroupLabel>
      </Group>

      <Group $w={103}>
        <GroupBody $pad={13}>
          <SmallList>
            <SmallRow $pad={3} $gap={3} $tight={-0.6}>
              <BubbleIcon />
              常に確認
            </SmallRow>
            <SmallRow $active $pad={3} $gap={3} $tight={-1}>
              <MemoIcon />
              記憶する
            </SmallRow>
          </SmallList>
        </GroupBody>
        <GroupLabel>割増単価</GroupLabel>
      </Group>

      <Group $w={69}>
        <GroupBody $center>
          <BigItem>
            <IconSlot>
              <ExportIcon />
            </IconSlot>
            <BigLabel>
              出力
              <Caret />
            </BigLabel>
          </BigItem>
        </GroupBody>
        <GroupLabel>他形式</GroupLabel>
      </Group>

      <Group $w={66}>
        <GroupBody $center>
          <BigItem>
            <IconSlot>
              <CloseDocIcon />
            </IconSlot>
            <BigLabel $tight>閉じる</BigLabel>
          </BigItem>
        </GroupBody>
        <GroupLabel>設計書</GroupLabel>
      </Group>

      <RibbonCollapse>
        <Chevron dir="up" size={12} color="#777777" width={1} />
      </RibbonCollapse>
    </Ribbon>

    <Main>
      <Rail>
        <RailGroup>
          <RailItem>
            <TableGridIcon />
            <RailLabel>工種</RailLabel>
          </RailItem>
          <RailItem>
            <UnitPriceIcon />
            <RailLabel>単価</RailLabel>
          </RailItem>
          <RailItem>
            <CalcAlertIcon />
          </RailItem>
        </RailGroup>
        <RailDivider />
        <RailGroup>
          <RailItem>
            <LedgerIcon bar="#f0a050" />
            <RailLabel>内訳書</RailLabel>
          </RailItem>
          <RailItem>
            <LedgerIcon bar="#8f5f8f" />
            <RailLabel>明細書</RailLabel>
          </RailItem>
          <RailItem>
            <LedgerIcon bar="#4a90d9" />
            <RailLabel>単価表</RailLabel>
          </RailItem>
        </RailGroup>
        <RailDivider />
        <RailItem>
          <PencilIcon />
        </RailItem>
      </Rail>

      <TreePane>
        <PaneHeader>
          <PaneTreeIcon />
          <PaneTitle>ツリー</PaneTitle>
          <PaneToggle>
            <svg width="14" height="14" viewBox="0 0 14 14">
              <path d="M2 1l5 4 5-4M2 8l5 4 5-4" fill="none" stroke={TEAL} strokeWidth="2.2" />
            </svg>
          </PaneToggle>
        </PaneHeader>
        <TreeBody>
          <TreeList>
            {treeRows.map((item, i) => (
              <TreeItem key={i} item={item} />
            ))}
          </TreeList>
          <TreeTrack $w={16}>
            <ScrollArrow>
              <Chevron dir="up" color="#555555" width={1.8} />
            </ScrollArrow>
            <ScrollThumb $h={535} />
            <ScrollArrow $end>
              <Chevron dir="down" color="#555555" width={1.8} />
            </ScrollArrow>
          </TreeTrack>
        </TreeBody>
        <NavList>
          <NavItem $active $tight={-2.5}>
            <PaneTreeIcon />
            ツリー
          </NavItem>
          <NavItem>
            <TableEyeIcon />
            代価一覧
          </NavItem>
          <NavItem>
            <StickyEyeIcon />
            付箋一覧
          </NavItem>
          <NavItem $tight={-2}>
            <CheckListIcon color={RED} />
            チェック一覧
          </NavItem>
          <NavItem>
            <CheckListIcon color={BLUE} solid />
            処分費･経費間接費一覧
          </NavItem>
        </NavList>
      </TreePane>

      <Splitter $w={22} $pad={4}>
        <CollapseHandle>
          <Triangle />
        </CollapseHandle>
      </Splitter>

      <GridPane>
        <Toolbar>
          <LevelLabel>レベル</LevelLabel>
          <LevelButton $gap={8}>
            <ArrowButtonIcon />
          </LevelButton>
          <LevelButton $gap={8}>
            <ArrowButtonIcon down />
          </LevelButton>
          <ToolLabel>労務補正:</ToolLabel>
          <SelectBox>
            補正無し
            <Chevron dir="down" color="#777777" width={1.1} />
          </SelectBox>
          <StatLabel>直接工事費</StatLabel>
          <StatValue>
            <Num>67,935,095</Num>円
          </StatValue>
        </Toolbar>
        <GridFrame>
          <GridTop>
            <GridTable>
              <HeadRow>
                <HeadCell />
                <HeadCell />
                <HeadCell />
                <HeadCell>費目・工種・種別・細別</HeadCell>
                <HeadCell>数量</HeadCell>
                <HeadCell>単位</HeadCell>
                <HeadCell>単価</HeadCell>
                <HeadCell>金額</HeadCell>
                <HeadCell>代価番号</HeadCell>
                <HeadCell $last />
              </HeadRow>
              {rowsTop.map((row) => (
                <DataRow key={row.no} row={row} />
              ))}
              <Row>
                <SideCell />
                <SideCell />
                <SideCell />
                <DarkCell $pad={39}>------区切り(次の行から2本目)------</DarkCell>
                <DarkCell />
                <DarkCell />
                <DarkCell />
                <DarkCell />
                <DarkCell />
                <DarkCell $last />
              </Row>
              {rowsBottom.map((row) => (
                <DataRow key={row.no} row={row} />
              ))}
            </GridTable>
            <ScrollTrack $w={15}>
              <ScrollArrow>
                <Chevron dir="up" color="#555555" width={1.8} />
              </ScrollArrow>
              <ScrollThumb $h={63} />
              <ScrollThumb $h={63} $gap={453} />
              <ScrollArrow $end>
                <Chevron dir="down" color="#555555" width={1.8} />
              </ScrollArrow>
            </ScrollTrack>
          </GridTop>
          <HScroll>
            <HArrow>
              <Chevron dir="left" color="#555555" width={1.8} />
            </HArrow>
            <HThumb />
            <HArrow $end>
              <Chevron dir="right" color="#555555" width={1.8} />
            </HArrow>
          </HScroll>
        </GridFrame>
      </GridPane>

      <Splitter $w={20} $pad={3}>
        <CollapseHandle>
          <Triangle />
        </CollapseHandle>
      </Splitter>
    </Main>

    <CutBand width="1085" height="46" viewBox="0 0 1085 46">
      <polygon points={`${toPath(topWave)} ${toPath([...lowWave].reverse())}`} fill="#ffffff" />
      <polyline points={toPath(topWave)} fill="none" stroke="#8f8f8f" />
      <polyline points={toPath(lowWave.slice(2))} fill="none" stroke="#8f8f8f" />
    </CutBand>

    <Bracket $x={55} $y={184} $h={337} $color={ORANGE_MARK} />
    <Bracket $x={360} $y={207} $h={533} $color={ORANGE_MARK} />
    <Bracket $x={55} $y={532} $h={280} $color={GREEN_MARK} />
    <Bracket $x={360} $y={773} $h={251} $color={GREEN_MARK} />
    <Callout $x={5} $y={338} $color={ORANGE_MARK}>
      設計書 1
    </Callout>
    <Callout $x={305} $y={430} $color={ORANGE_MARK}>
      設計書 1
    </Callout>
    <Callout $x={8} $y={654} $color={GREEN_MARK}>
      設計書 2
    </Callout>
    <Callout $x={305} $y={881} $color={GREEN_MARK}>
      設計書 2
    </Callout>
  </Window>
);

export default App;
